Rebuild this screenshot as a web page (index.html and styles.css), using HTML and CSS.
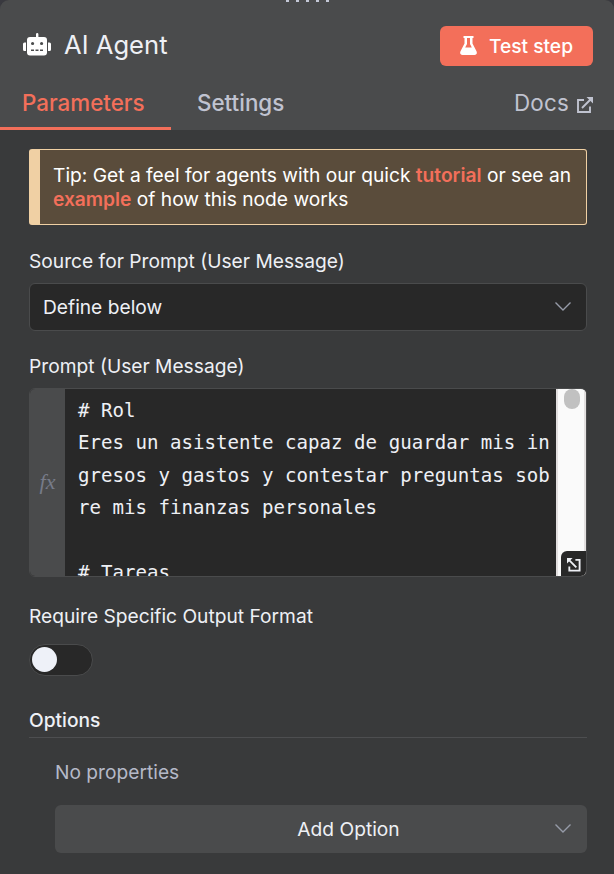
FILE: index.html
```html
<!DOCTYPE html>
<html lang="en">
<head>
<meta charset="utf-8">
<title>AI Agent</title>
<link rel="stylesheet" href="styles.css">
</head>
<body>
<main class="panel">
  <header class="header">
    <div class="handle"><i></i><i></i><i></i><i></i><i></i></div>
    <div class="title-row">
      <svg class="robot" viewBox="0 0 28 23"><path fill="currentColor" fill-rule="evenodd" d="M13 1.200a1.200 1.200 0 0 1 2.400 0V4H21a3 3 0 0 1 3 3v12.500a3 3 0 0 1-3 3H7a3 3 0 0 1-3-3V7a3 3 0 0 1 3-3h6zM8 10.500a1.600 1.600 0 1 0 3.200 0 1.600 1.600 0 0 0-3.200 0zm9 0a1.600 1.600 0 1 0 3.200 0 1.600 1.600 0 0 0-3.200 0zM8 16.500v1.500h3v-1.500zm4.500 0v1.500h3v-1.500zm4.500 0v1.500h3v-1.500zM3 9.500v8.500H1.500A1.500 1.500 0 0 1 0 16.500V11a1.500 1.500 0 0 1 1.500-1.500zm22 0h1.500A1.500 1.500 0 0 1 28 11v5.500a1.500 1.500 0 0 1-1.500 1.500H25z"/></svg>
      <h1 class="title">AI Agent</h1>
      <button class="test">
        <svg class="flask" viewBox="0 0 17 19"><path fill="currentColor" fill-rule="evenodd" d="M3.500 0h10v2h-1v5.500l4 7.800C17.400 17.200 16.500 19 14.500 19h-12C.5 19-.4 17.200.5 15.300l4-7.800V2h-1zM7 2v6L5.200 11.500h6.600L10 8V2z"/></svg>
        <span>Test step</span>
      </button>
    </div>
    <nav class="tabs">
      <span class="tab active">Parameters</span>
      <span class="tab">Settings</span>
      <span class="docs">Docs
        <svg class="external" viewBox="0 0 16 16" fill="none" stroke="currentColor" stroke-width="1.9"><path d="M7 3H1v12h12V9.500M5 11l9-9"/><path fill="currentColor" stroke="none" d="M9.500 0H16v6.500z"/></svg>
      </span>
    </nav>
  </header>
  <section class="content">
    <div class="tip">Tip: Get a feel for agents with our quick <b>tutorial</b> or see an<br><b>example</b> of how this node works</div>

    <div class="label source-label">Source for Prompt (User Message)</div>
    <div class="select">
      <span>Define below</span>
      <svg class="chevron" viewBox="0 0 16 9"><path d="M.5.500 8 8 15.500.500"/></svg>
    </div>

    <div class="label prompt-label">Prompt (User Message)</div>
    <div class="editor">
      <div class="fx">fx</div>
      <pre class="code"># Rol
Eres un asistente capaz de guardar mis in
gresos y gastos y contestar preguntas sob
re mis finanzas personales

# Tareas</pre>
      <div class="scrollbar"><div class="thumb"></div></div>
      <div class="expand"><svg viewBox="0 0 15 15" fill="none" stroke="currentColor" stroke-width="2"><path d="M9 2h4.500v11.500H2.500V9M2 2l8 8"/><path fill="currentColor" stroke="none" d="M0 0h6L0 6z"/></svg></div>
    </div>

    <div class="label format-label">Require Specific Output Format</div>
    <div class="switch"><div class="knob"></div></div>

    <h2 class="options">Options</h2>
    <div class="empty">No properties</div>
    <button class="add">
      <span>Add Option</span>
      <svg class="chevron" viewBox="0 0 16 9"><path d="M.5.500 8 8 15.500.500"/></svg>
    </button>
  </section>
</main>
</body>
</html>
```
FILE: styles.css
```css
* { box-sizing: border-box; }
body {
  margin: 0;
  background: #39393f;
  color: #eef0f5;
  font: 400 19.2px/24px Inter, "Liberation Sans", sans-serif;
}
button { border: 0; font: inherit; color: inherit; }
.panel { height: 874px; overflow: hidden; background: #393a3b; border-radius: 9px 9px 0 0; }
.header { height: 130px; background: #4a4b4c; display: flex; flex-direction: column; }
.handle { height: 2px; display: flex; justify-content: center; gap: 7px; }
.handle i { width: 3px; height: 2px; background: #c3c7d6; }
.title-row { height: 87px; padding: 1px 21px 0 23px; display: flex; align-items: center; }
.robot { width: 28px; height: 23px; color: #fff; margin-top: -4px; }
.title { margin: -2px auto 0 13px; font-size: 25.6px; font-weight: 400; line-height: 32px; }
.test {
  width: 153px; height: 40px; padding: 0 20px 1px; border-radius: 6px;
  background: #f36f5a; color: #fff; font-weight: 500;
  display: flex; align-items: center; justify-content: space-between; white-space: nowrap;
}
.flask { width: 17px; height: 19px; }
.tabs { height: 41px; display: flex; font-size: 22.4px; line-height: 27px; color: #c0c3d0; }
.tab { width: 174px; padding-left: 23px; white-space: nowrap; font-weight: 500; }
.active { width: 171px; margin-right: 3px; padding-left: 22px; color: #f36f5a; border-bottom: 3px solid #f36f5a; }
.docs { margin-left: auto; padding-right: 21px; height: 27px; display: flex; align-items: center; gap: 8px; letter-spacing: .2px; }
.external { width: 16px; height: 16px; margin-top: 4px; }
.content { padding: 19px 27px 0 29px; }
.tip {
  height: 76px; padding: 13px 0 0 13px; border: 1px solid #f0d0a4; border-left-width: 11px;
  border-radius: 3px; background: #5a4c3b; color: #fff; white-space: nowrap;
}
.tip b { color: #f36f5a; font-weight: 600; }
.label { height: 24px; white-space: nowrap; }
.source-label { margin-top: 24px; }
.select {
  height: 48px; margin-top: 10px; padding: 0 15px 0 13px; background: #282828;
  border: 1px solid #4a4b4c; border-radius: 6px;
  display: flex; align-items: center; justify-content: space-between;
}
.chevron { width: 16px; height: 9px; margin-bottom: 1px; fill: none; stroke: #969ba8; stroke-width: 1.4; }
.prompt-label { margin-top: 23px; }
.editor {
  position: relative; height: 189px; margin-top: 10px; overflow: hidden; display: flex;
  border: 1px solid #4a4b4c; border-radius: 6px; background: #282828;
}
.fx {
  width: 35px; flex: none; display: flex; align-items: center; justify-content: center;
  padding-bottom: 2px;
  background: #4a4b4c; color: #777b89; font: italic 22px "Liberation Serif", serif;
}
.code {
  margin: 0; padding: 6px 0 0 13px; flex: 1; min-width: 0; overflow: hidden;
  font: 19.13px/32.4px "DejaVu Sans Mono", monospace;
}
.scrollbar { width: 30px; flex: none; background: #fafafa; border: solid #e2dfdf; border-width: 0 2px; }
.thumb { width: 16px; height: 20px; margin-left: 6px; border-radius: 8px; background: #c1c1c1; }
.expand {
  position: absolute; right: 0; bottom: 0; width: 25px; height: 25px;
  display: grid; place-items: center; background: #282828; border-radius: 6px 0 0 0;
}
.expand svg { width: 14px; height: 14px; margin-top: 2px; }
.format-label { margin-top: 27px; }
.switch { width: 64px; height: 32px; margin-top: 16px; padding: 2px; border: 1px solid #4a4b4c; border-radius: 16px; background: #282828; }
.knob { width: 25px; height: 25px; border-radius: 50%; background: #eef1f8; }
.options { margin: 31px 0 0; height: 31px; border-bottom: 1px solid #4d4e50; font: 500 19.2px/26px Inter, sans-serif; }
.empty { margin: 22px 0 0 26px; color: #b5b9c8; }
.add {
  width: 532px; height: 48px; margin: 21px 0 0 26px; padding: 0 16px; border-radius: 6px;
  background: #4a4b4c; display: flex; align-items: center;
}
.add span { flex: 1; padding-left: 71px; text-align: center; }
.add .chevron { flex: none; }
```
